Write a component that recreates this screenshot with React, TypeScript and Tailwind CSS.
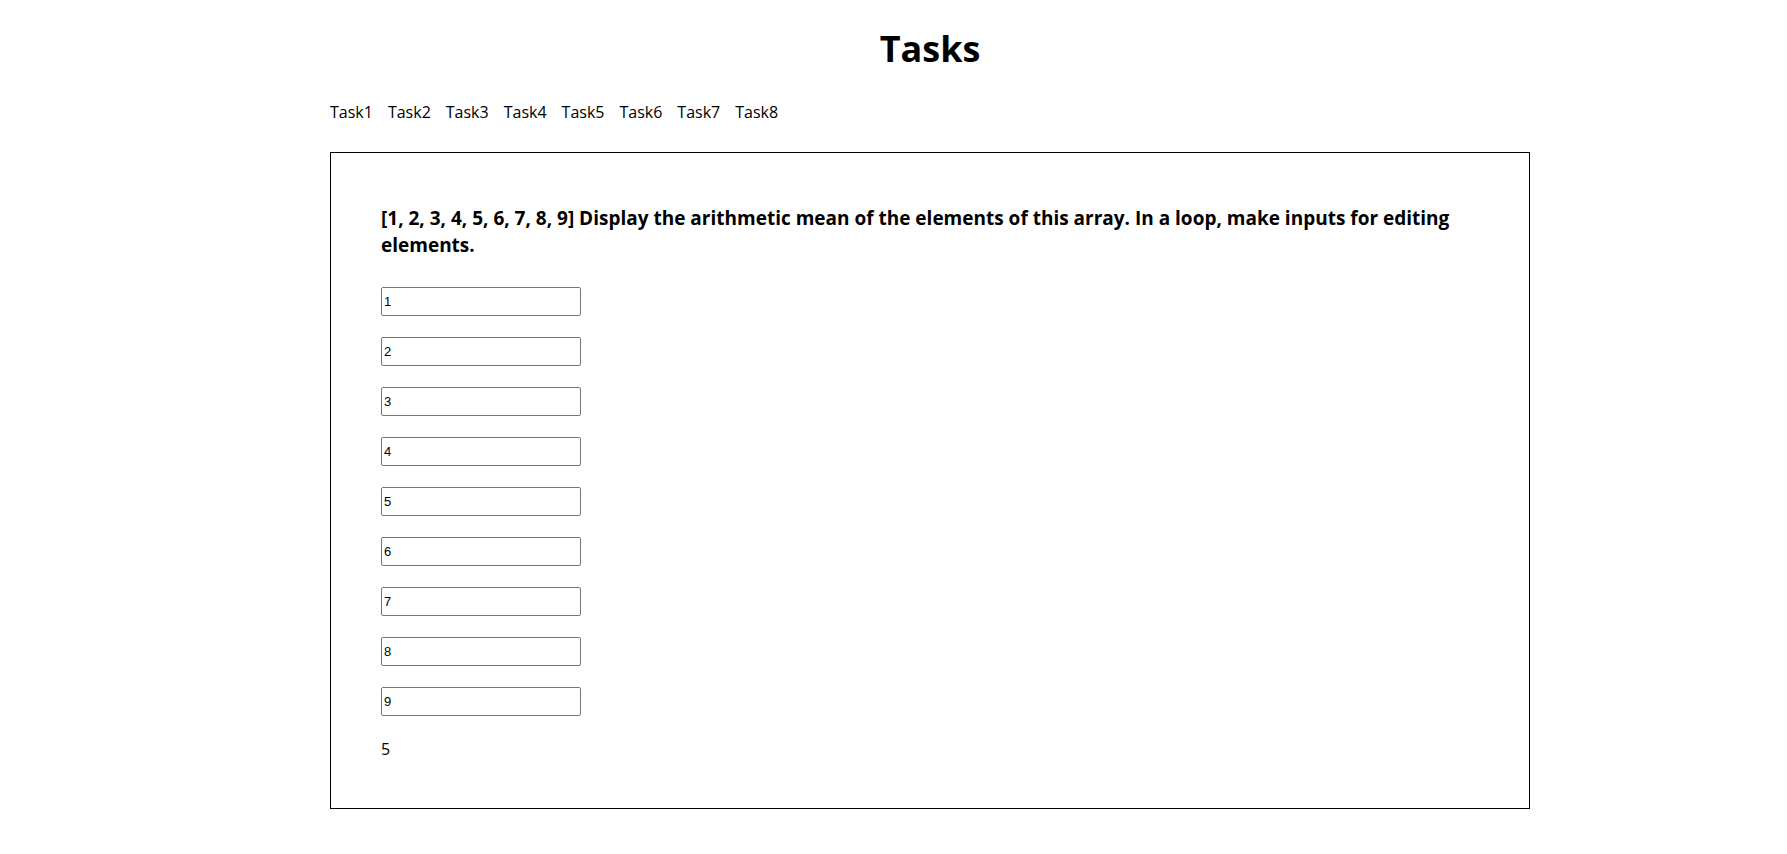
import { useState } from "react";

const tasks = ["Task1", "Task2", "Task3", "Task4", "Task5", "Task6", "Task7", "Task8"];

const Task1 = () => {
  const [nums, setNums] = useState<number[]>([1, 2, 3, 4, 5, 6, 7, 8, 9]);
  const mean = nums.reduce((a, b) => a + b, 0) / nums.length;

  const handleChange = (i: number, value: string) => {
    setNums(nums.map((n, idx) => (idx === i ? Number(value) : n)));
  };

  return (
    <div className="border border-black px-[50px] pt-[52px] pb-[48px]">
      <h3 className="text-[19px] leading-[27px] font-bold">
        [1, 2, 3, 4, 5, 6, 7, 8, 9] Display the arithmetic mean of the elements of this array. In a loop, make
        inputs for editing elements.
      </h3>
      <div className="flex flex-col gap-[21px] mt-[28px]">
        {nums.map((n, i) => (
          <input
            key={i}
            className="w-[200px] h-[29px] border border-[#767676] rounded-[2px] px-[2px] text-[13px] font-['Liberation_Sans',sans-serif] outline-none"
            value={n}
            onChange={(e) => handleChange(i, e.target.value)}
          />
        ))}
      </div>
      <p className="mt-[22px] leading-[22px]">{mean}</p>
    </div>
  );
};

export default function App() {
  return (
    <div className="min-h-screen bg-white text-black font-['Open_Sans',sans-serif]">
      <div className="w-[1200px] ml-[330px]">
        <h1 className="text-center text-[36px] font-bold leading-[44px] pt-[27px]">Tasks</h1>
        <nav className="flex gap-[15px] mt-[30px] text-[16px] leading-[22px]">
          {tasks.map((t) => (
            <a key={t} href="#" className="text-black">
              {t}
            </a>
          ))}
        </nav>
        <div className="mt-[29px]">
          <Task1 />
        </div>
      </div>
    </div>
  );
}
